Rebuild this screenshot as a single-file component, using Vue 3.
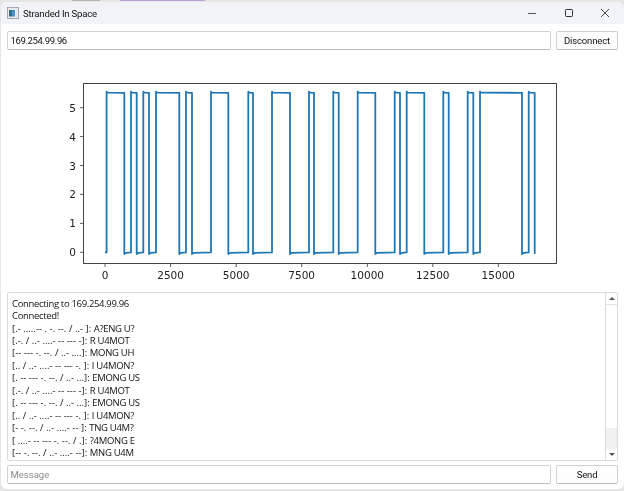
<script setup>
const edges = [106.6,124.3,131,136.7,143.3,149,156,179.3,186,192,211,228.3,248.3,253,272,290,309,314,333.3,338.7,357.7,375.3,394.7,400,406.7,424.3,443.3,448.7,467.7,473.3,480,522,528.7,534.7]
const HIGH = 92.6, LOW = 252.4
function buildPath() {
  let d = `M105 ${LOW} L${edges[0]} ${LOW}`
  edges.forEach((x, i) => {
    if (i % 2 === 0) {
      d += ` L${x} ${HIGH - 1} L${x + 1.2} ${HIGH} L${edges[i + 1]} ${HIGH + 0.2}`
    } else {
      const next = edges[i + 1]
      d += ` L${x} ${LOW + 1.6}`
      if (next) d += ` L${x + 2} ${LOW + 0.4} L${next} ${LOW}`
    }
  })
  return d
}
const linePath = buildPath()
const xTicks = [[105,'0'],[170.6,'2500'],[236.2,'5000'],[301.7,'7500'],[367.3,'10000'],[432.8,'12500'],[498.3,'15000']]
const yTicks = [[252.3,'0'],[223.4,'1'],[194.4,'2'],[165.5,'3'],[136.6,'4'],[107.7,'5']]
const statusLines = ['Connecting to 169.254.99.96', 'Connected!']
const decoded = [
  ['[.- .....-- . -. --. / ..- ]: ', 'A?ENG U?'],
  ['[.-. / ..- ....- -- --- -]: ', 'R U4MOT'],
  ['[-- --- -. --. / ..- ....]: ', 'MONG UH'],
  ['[.. / ..- ....- -- --- -. ]: ', 'I U4MON?'],
  ['[. -- --- -. --. / ..- ...]: ', 'EMONG US'],
  ['[.-. / ..- ....- -- --- -]: ', 'R U4MOT'],
  ['[. -- --- -. --. / ..- ...]: ', 'EMONG US'],
  ['[.. / ..- ....- -- --- -. ]: ', 'I U4MON?'],
  ['[- -. --. / ..- ....- -- ]: ', 'TNG U4M?'],
  ['[ ....- -- --- -. --. / .]: ', '?4MONG E'],
  ['[-- -. --. / ..- ....- --]: ', 'MNG U4M']
]
</script>

<template>
  <div class="screen">
    <div class="behind">
      <span class="behind-gray"></span>
      <span class="behind-purple"></span>
    </div>
    <div class="window">
      <header class="titlebar">
        <svg class="app-icon" width="12" height="12" viewBox="0 0 12 12">
          <rect x="0.5" y="0.5" width="11" height="11" fill="#e8eaf0" stroke="#a4a8b0" />
          <rect x="2" y="3" width="3" height="6.5" fill="#2f6f7f" />
          <rect x="5" y="3" width="3" height="6.5" fill="#4a90c8" />
        </svg>
        <span class="title">Stranded In Space</span>
        <div class="controls">
          <svg width="10" height="10" viewBox="0 0 10 10"><path d="M1 5.5H9" stroke="#555" stroke-width="1" /></svg>
          <svg width="10" height="10" viewBox="0 0 10 10"><rect x="1.5" y="1.5" width="7" height="7" rx="0.8" fill="none" stroke="#333" /></svg>
          <svg width="10" height="10" viewBox="0 0 10 10"><path d="M1 1L9 9M9 1L1 9" stroke="#333" stroke-width="0.9" /></svg>
        </div>
      </header>

      <div class="content">
        <div class="row">
          <div class="field">169.254.99.96</div>
          <button class="btn">Disconnect</button>
        </div>

        <svg class="chart" width="623" height="240" viewBox="0 0 623 240">
          <g transform="translate(-1 -52)">
            <rect x="83.5" y="83.5" width="473" height="180" fill="#fff" stroke="#444" stroke-width="1" />
            <g v-for="t in xTicks" :key="t[1]">
              <path :d="`M${t[0]} 264V267`" stroke="#333" stroke-width="0.8" />
              <text :x="t[0]" y="279" text-anchor="middle" class="tick">{{ t[1] }}</text>
            </g>
            <g v-for="t in yTicks" :key="t[1]">
              <path :d="`M80 ${t[0]}H83.5`" stroke="#333" stroke-width="0.8" />
              <text x="76" :y="t[0] + 4" text-anchor="end" class="tick">{{ t[1] }}</text>
            </g>
            <path :d="linePath" fill="none" stroke="#1f77b4" stroke-width="1.8" stroke-linejoin="round" />
          </g>
        </svg>

        <div class="log">
          <div class="log-text">
            <div v-for="line in statusLines" :key="line" class="status">{{ line }}</div>
            <div v-for="(line, i) in decoded" :key="i"><span class="morse">{{ line[0] }}</span><span class="word">{{ line[1] }}</span></div>
          </div>
          <div class="scrollbar">
            <div class="arrow-box up"><span class="tri-up"></span></div>
            <div class="track"></div>
            <div class="thumb"></div>
            <div class="arrow-box"><span class="tri-down"></span></div>
          </div>
        </div>

        <div class="row bottom">
          <div class="field placeholder">Message</div>
          <button class="btn">Send</button>
        </div>
      </div>
    </div>
  </div>
</template>

<style scoped>
.screen {
  width: 624px;
  height: 491px;
  background: #e6e6e6;
  padding: 0 0 2px 1px;
  box-sizing: border-box;
  overflow: hidden;
}
.behind {
  height: 2px;
  display: flex;
  align-items: flex-start;
  padding-left: 71px;
  gap: 20px;
}
.behind-gray {
  width: 28px;
  height: 1px;
  background: #b5b5b5;
}
.behind-purple {
  width: 85px;
  height: 1px;
  background: #b9a3d8;
}
.window {
  height: 487px;
  background: #fff;
  border-radius: 7px 7px 6px 6px;
  overflow: hidden;
  display: flex;
  flex-direction: column;
  font-family: Roboto, "Liberation Sans", sans-serif;
  filter: blur(0.3px);
}
.titlebar {
  height: 22px;
  flex: none;
  background: #f1f3f9;
  display: flex;
  align-items: center;
  padding: 0 0 0 6px;
  gap: 4px;
}
.title {
  font-size: 9.6px;
  letter-spacing: -0.2px;
  color: #111;
}
.controls {
  margin-left: auto;
  display: flex;
  gap: 26.5px;
  padding-right: 14px;
  align-items: center;
}
.content {
  flex: 1;
  display: flex;
  flex-direction: column;
  padding: 7px 6px 0 6px;
}
.row {
  display: flex;
  gap: 5px;
  height: 19px;
  flex: none;
}
.field {
  flex: 1;
  border: 1px solid #d2d2d2;
  border-bottom-color: #bdbdbd;
  border-radius: 2px;
  font-size: 9.5px;
  letter-spacing: -0.35px;
  line-height: 17px;
  padding: 0 2.5px;
  color: #111;
  background: #fff;
}
.placeholder {
  color: #8a8a8a;
  letter-spacing: 0;
}
.btn {
  width: 62px;
  flex: none;
  border: 1px solid #d0d0d0;
  border-bottom-color: #bbb;
  border-radius: 2px;
  background: #fdfdfd;
  font: 9.5px Roboto, "Liberation Sans", sans-serif;
  letter-spacing: -0.15px;
  color: #111;
  padding: 0;
}
.chart {
  display: block;
  flex: none;
  margin: 2px 0 0 -6px;
}
.tick {
  font-family: "DejaVu Sans", sans-serif;
  font-size: 10.5px;
  fill: #222;
}
.log {
  height: 169px;
  flex: none;
  border: 1px solid #dcdcdc;
  border-radius: 2px;
  box-sizing: border-box;
  display: flex;
  background: #fff;
}
.log-text {
  flex: 1;
  padding: 4.6px 0 0 4px;
  font-family: "Open Sans", "Noto Sans", sans-serif;
  font-size: 9.5px;
  line-height: 12.45px;
  color: #111;
  white-space: pre;
  overflow: hidden;
}
.status {
  letter-spacing: -0.33px;
}
.morse {
  letter-spacing: 0.03px;
}
.word {
  letter-spacing: -0.3px;
}
.scrollbar {
  width: 11px;
  flex: none;
  border-left: 1px solid #dcdcdc;
  display: flex;
  flex-direction: column;
}
.arrow-box {
  height: 11px;
  flex: none;
  display: flex;
  align-items: center;
  justify-content: center;
}
.arrow-box.up {
  border-bottom: 1px solid #e4e4e4;
}
.track {
  flex: 1;
}
.thumb {
  height: 21px;
  flex: none;
  background: #f0f0f0;
}
.tri-up, .tri-down {
  width: 0;
  height: 0;
  border-left: 3px solid transparent;
  border-right: 3px solid transparent;
}
.tri-up {
  border-bottom: 3px solid #555;
}
.tri-down {
  border-top: 3px solid #555;
}
.bottom {
  margin-top: 4px;
}
</style>

<style>
html, body {
  margin: 0;
  overflow: hidden;
}
</style>
